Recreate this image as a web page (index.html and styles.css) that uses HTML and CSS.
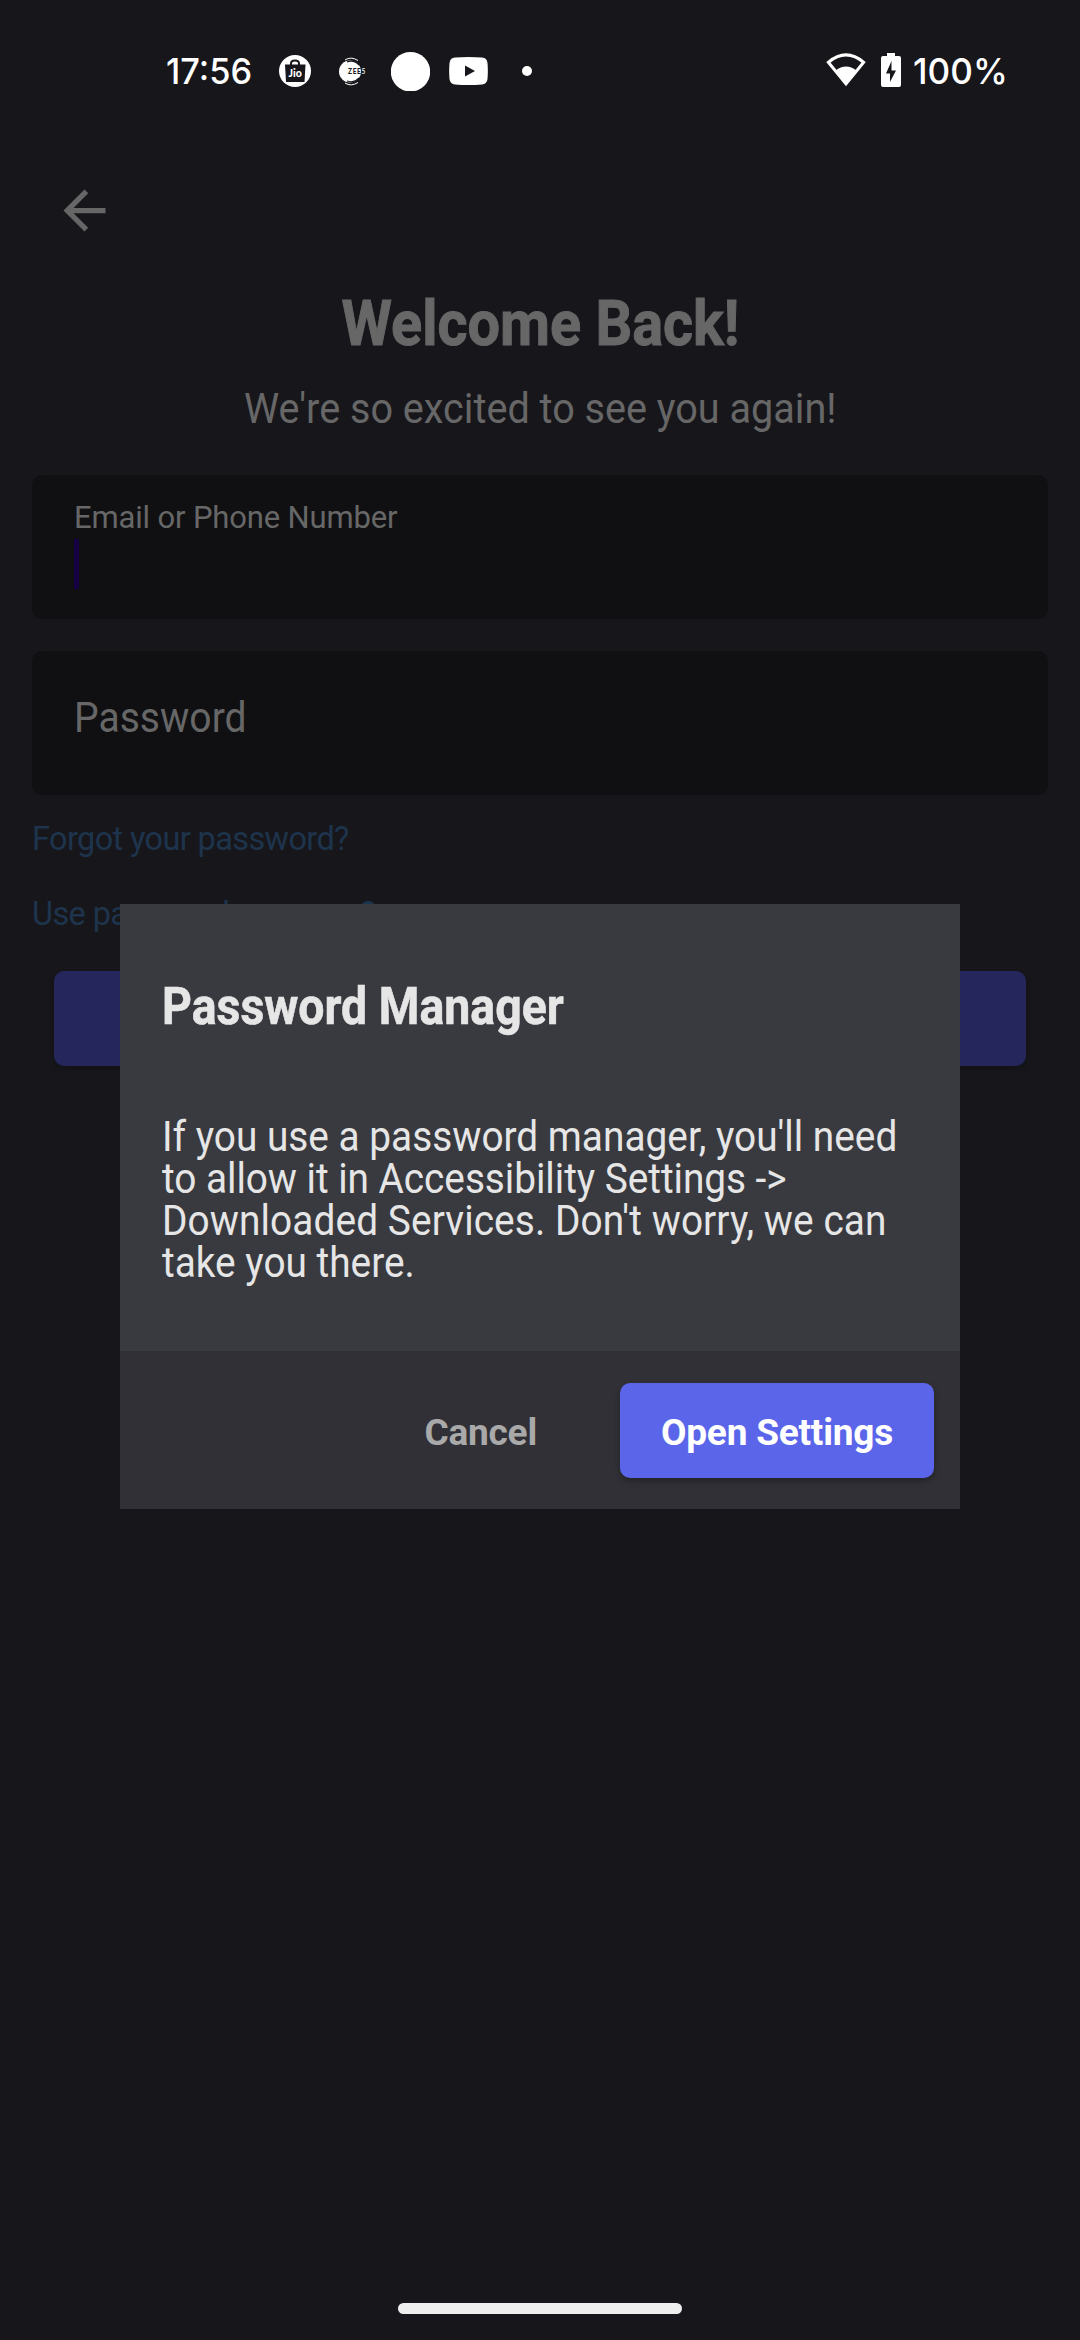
FILE: index.html
```html
<!DOCTYPE html>
<html lang="en">
<head>
<meta charset="utf-8">
<title>Welcome Back!</title>
<link rel="stylesheet" href="styles.css">
</head>
<body>
<div class="screen">
  <header class="status">
    <div class="clock"><span>17:56</span></div>
    <svg class="jio" width="32" height="32" viewBox="0 0 32 32">
      <circle cx="16" cy="16" r="16" fill="#fff"/>
      <path d="M6 9.500h20.500l-1 17.500h-18.500z" fill="#17161b"/>
      <path d="M12 10V8.500q0-3 4-3t4 3V10" fill="none" stroke="#17161b" stroke-width="2"/>
      <text x="16.200" y="21.800" class="jio-text">Jio</text>
    </svg>
    <svg class="zee" width="30" height="30" viewBox="0 0 30 30">
      <circle cx="12" cy="15.500" r="11" fill="#fff"/>
      <path d="M7 4Q13 0 20 4.500M7 27Q13 31 20 26.500" fill="none" stroke="#fff" stroke-width="1"/>
      <path d="M9 6Q16 3.500 21 9M9 25Q16 27.500 21 22" fill="none" stroke="#17161b" stroke-width="1.200"/>
      <text x="10" y="17.700" class="zee-text">ZEE<tspan fill="#ddd">5</tspan></text>
    </svg>
    <svg class="ball" width="39" height="39" viewBox="0 0 39 39"><circle cx="19.500" cy="19.700" r="19.700" fill="#fff"/></svg>
    <svg class="tube" width="39" height="28" viewBox="0 0 39 28">
      <path d="M6 .6Q19.500-.4 33 .6Q38 1 38.500 6Q39.200 14 38.500 22Q38 27 33 27.400Q19.500 28.400 6 27.400Q1 27 .5 22Q-.2 14 .5 6Q1 1 6 .6Z" fill="#fff"/>
      <path d="M16 8.500v11l10-5.500z" fill="#17161b"/>
    </svg>
    <svg class="dot" width="10" height="10" viewBox="0 0 10 10"><circle cx="5" cy="5" r="5" fill="#fff"/></svg>
    <svg class="wifi" width="40" height="34" viewBox="0 0 40 34">
      <path d="M2.300 9.300Q20-5.500 37.700 9.300L20 31Z" fill="none" stroke="#fff" stroke-width="3"/>
      <path d="M9.500 17.500Q20 9.500 30.500 17.500L20 31.500Z" fill="#fff"/>
    </svg>
    <svg class="battery" width="20" height="34" viewBox="0 0 20 34">
      <path d="M6 0h8v3h4a2 2 0 0 1 2 2v27a2 2 0 0 1-2 2H2a2 2 0 0 1-2-2V5a2 2 0 0 1 2-2h4z" fill="#fff"/>
      <path d="M10.500 8v9.500H15L9 29V20.500H5z" fill="#17161b"/>
    </svg>
    <div class="level"><span>100%</span></div>
  </header>

  <main class="login">
    <svg class="back" width="63" height="63" viewBox="0 0 24 24"><path d="M20 11H7.830l5.590-5.590L12 4l-8 8 8 8 1.410-1.410L7.830 13H20z" fill="#666"/></svg>
    <h1 class="heading"><span>Welcome Back!</span></h1>
    <p class="lead"><span>We're so excited to see you again!</span></p>
    <div class="field focused">
      <label class="field-label">Email or Phone Number</label>
      <span class="caret"></span>
    </div>
    <div class="field empty"><span class="placeholder">Password</span></div>
    <a class="link">Forgot your password?</a>
    <a class="link manager">Use password manager?</a>
    <div class="submit"></div>
  </main>

  <section class="dialog">
    <div class="dialog-body">
      <h2 class="dialog-title">Password Manager</h2>
      <p class="dialog-text">If you use a password manager, you'll need<br><span class="line-b">to allow it in Accessibility Settings -&gt;</span><br><span class="line-c">Downloaded Services. Don't worry, we can</span><br>take you there.</p>
    </div>
    <footer class="actions">
      <span class="cancel">Cancel</span>
      <span class="open">Open Settings</span>
    </footer>
  </section>

  <div class="gesture"></div>
</div>
</body>
</html>
```
FILE: styles.css
```css
* { box-sizing: border-box; }
body { margin: 0; background: #17161b; font-family: Roboto, sans-serif; }
h1, h2, p { margin: 0; }
svg { display: block; flex: none; }

.screen {
  position: relative;
  width: 1080px;
  height: 2340px;
  overflow: hidden;
  display: flex;
  flex-direction: column;
  background: #17161b;
}

/* status bar */
.status {
  height: 142px;
  flex: none;
  display: flex;
  align-items: center;
  padding-left: 166px;
  color: #fff;
  font: 500 36px/44px Inter, sans-serif;
}
.clock, .level { white-space: nowrap; flex: none; }
.clock { width: 113px; }
.clock span, .level span { display: inline-block; transform: scaleX(.955); transform-origin: left; }
.level span { transform: scaleX(.975); }
.jio { margin-right: 27px; }
.zee { margin-right: 23px; }
.ball { margin-right: 19px; }
.tube { margin-right: 34px; }
.dot { margin-right: 294px; }
.wifi { margin: -2px 15px 0 0; }
.battery { margin: -2px 12px 0 0; }
.jio-text { font: 900 10.500px Lato, sans-serif; fill: #fff; text-anchor: middle; }
.zee-text { font: 900 6.500px Lato, sans-serif; fill: #17161b; letter-spacing: .7px; }

/* login form */
.login {
  display: flex;
  flex-direction: column;
  padding: 37px 32px 0;
  color: #676767;
}
.back { margin: 0 0 45px 21px; }
.heading, .lead { text-align: center; white-space: nowrap; }
.heading { font: 700 63px/74px Roboto, sans-serif; }
.heading span { display: inline-block; transform: scaleX(.915); -webkit-text-stroke: 1px currentColor; }
.lead { margin-top: 23px; font: 400 42px/50px Roboto, sans-serif; }
.lead span { display: inline-block; transform: scaleX(.943); }
.field {
  height: 144px;
  border-radius: 10px;
  background: #101012;
  padding-left: 42px;
}
.focused { margin-top: 41px; padding-top: 25px; }
.field-label { display: block; font-size: 31px; line-height: 36px; letter-spacing: -.15px; }
.caret { display: block; width: 5px; height: 50px; margin-top: 3px; background: #140042; }
.empty { margin-top: 32px; display: flex; align-items: center; }
.placeholder { margin-top: -10px; font-size: 42px; line-height: 50px; transform: scaleX(.93); transform-origin: left; }
.link {
  margin-top: 24px;
  color: #1d344c;
  font-size: 32.500px;
  line-height: 40px;
  letter-spacing: -.62px;
}
.manager { margin-top: 35px; }
.submit {
  height: 95px;
  margin: 37px 22px 0;
  border-radius: 10px;
  background: #25275c;
  box-shadow: 0 3px 5px rgba(0, 0, 0, .25);
}

/* dialog over the form */
.dialog {
  position: absolute;
  left: 120px;
  top: 904px;
  width: 840px;
  height: 605px;
  display: flex;
  flex-direction: column;
  background: #393a3f;
  color: #e6e6e6;
}
.dialog-body { flex: 1; padding: 73px 40px 0 42px; }
.dialog-title { font: 700 52px/60px Roboto, sans-serif; transform: scaleX(.893); transform-origin: left; white-space: nowrap; -webkit-text-stroke: .6px currentColor; }
.dialog-text {
  width: 822px;
  margin-top: 79px;
  font-size: 42px;
  line-height: 42px;
  white-space: nowrap;
  transform: scaleX(.924);
  transform-origin: left;
}
.line-b { letter-spacing: -.05px; }
.line-c { letter-spacing: .1px; }
.actions {
  height: 158px;
  display: flex;
  align-items: center;
  justify-content: flex-end;
  padding-right: 26px;
  background: #313036;
  font-weight: 700;
  font-size: 37px;
  letter-spacing: -.2px;
}
.cancel { margin: 4px 83px 0 0; color: #a9a9aa; }
.open {
  width: 314px;
  height: 95px;
  line-height: 100px;
  text-align: center;
  border-radius: 10px;
  background: #5b65ea;
  color: #fff;
  box-shadow: 0 3px 6px rgba(0, 0, 0, .3);
}

.gesture { width: 284px; height: 11px; margin: auto auto 26px; border-radius: 6px; background: #eee; }
```
